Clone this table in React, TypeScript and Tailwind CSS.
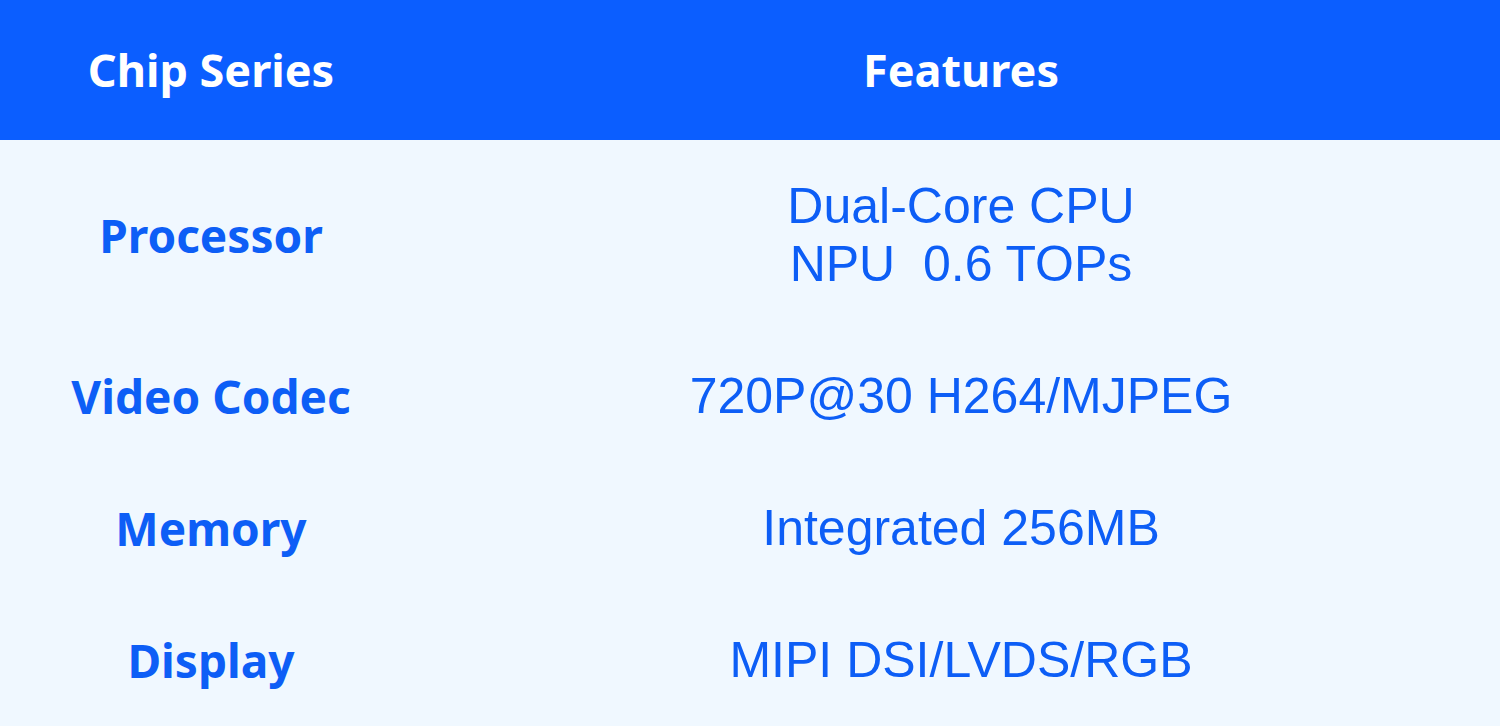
const ROWS = [
  { name: "Processor", lines: ["Dual-Core CPU", "NPU\u00a0\u00a00.6 TOPs"] },
  { name: "Video Codec", lines: ["720P@30 H264/MJPEG"] },
  { name: "Memory", lines: ["Integrated 256MB"] },
  { name: "Display", lines: ["MIPI DSI/LVDS/RGB"] },
];

export default function App() {
  return (
    <div className="h-[726px] w-[1500px] overflow-hidden bg-[#f0f8ff]">
      {/* header */}
      <div className="flex h-[140px] items-center bg-[#0b5eff] font-['Noto_Sans',sans-serif] text-[45px] font-bold text-white">
        <div className="w-[422px] text-center">Chip Series</div>
        <div className="flex-1 text-center">Features</div>
      </div>

      {/* rows */}
      {ROWS.map((row) => (
        <div key={row.name} className="flex items-center py-[37px]">
          <div className="w-[422px] text-center font-['Noto_Sans',sans-serif] text-[46px] font-bold leading-[58px] text-[#0d5ef6]">
            {row.name}
          </div>
          <div className="flex-1 text-center font-['Liberation_Sans',Arial,sans-serif] text-[50px] leading-[58px] text-[#0d5ef6]">
            {row.lines.map((l) => (
              <div key={l}>{l}</div>
            ))}
          </div>
        </div>
      ))}
    </div>
  );
}
